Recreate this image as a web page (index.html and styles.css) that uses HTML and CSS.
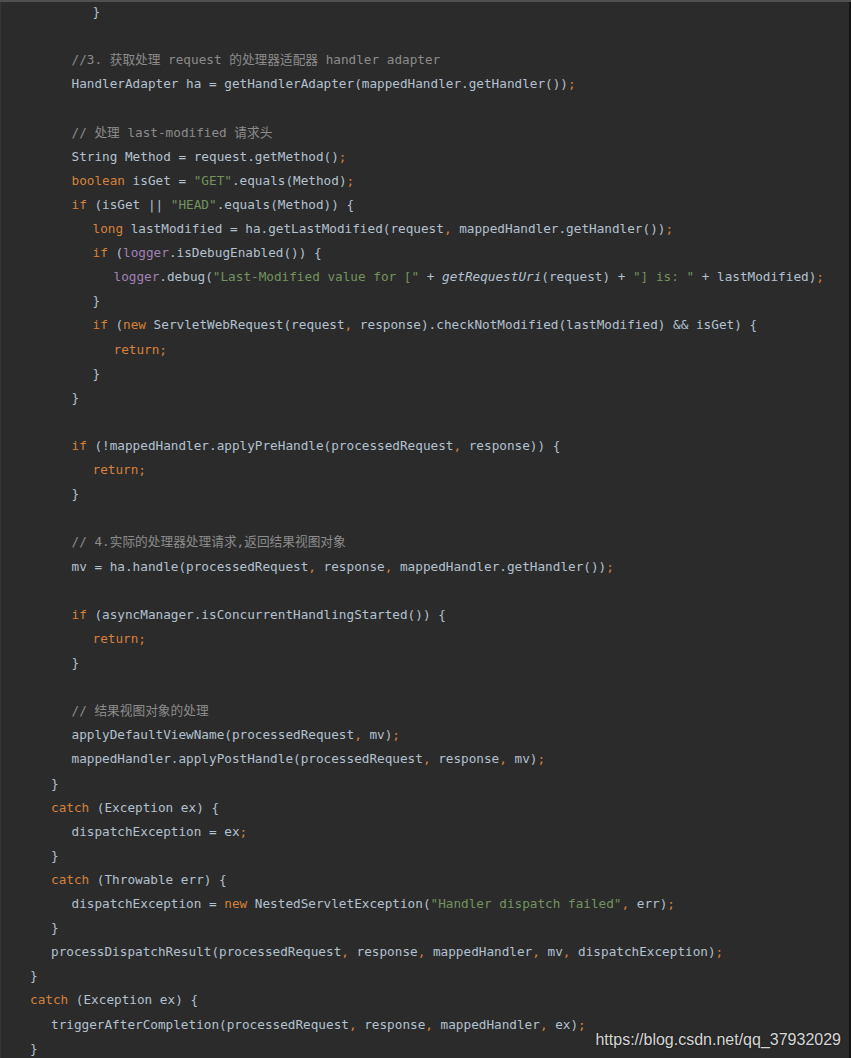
FILE: index.html
```html
<!DOCTYPE html>
<html lang="zh-CN">
<head>
  <meta charset="UTF-8">
  <meta name="viewport" content="width=device-width, initial-scale=1.0">
  <title>DispatcherServlet.doDispatch</title>
  <link rel="stylesheet" href="styles.css">
</head>
<body>
  <!-- Khối code -->
  <div class="code-shot">
    <div class="code">
      <div class="ln i3">}</div>
      <div class="ln"></div>
      <div class="ln i2"><span class="c">//3. 获取处理 request 的处理器适配器 handler adapter</span></div>
      <div class="ln i2">HandlerAdapter ha = getHandlerAdapter(mappedHandler.getHandler())<span class="k">;</span></div>
      <div class="ln"></div>
      <div class="ln i2"><span class="c">// 处理 last-modified 请求头</span></div>
      <div class="ln i2">String Method = request.getMethod()<span class="k">;</span></div>
      <div class="ln i2"><span class="k">boolean</span> isGet = <span class="s">"GET"</span>.equals(Method)<span class="k">;</span></div>
      <div class="ln i2"><span class="k">if</span> (isGet || <span class="s">"HEAD"</span>.equals(Method)) {</div>
      <div class="ln i3"><span class="k">long</span> lastModified = ha.getLastModified(request<span class="k">,</span> mappedHandler.getHandler())<span class="k">;</span></div>
      <div class="ln i3"><span class="k">if</span> (<span class="f">logger</span>.isDebugEnabled()) {</div>
      <div class="ln i4"><span class="f">logger</span>.debug(<span class="s">"Last-Modified value for ["</span> + <span class="m">getRequestUri</span>(request) + <span class="s">"] is: "</span> + lastModified)<span class="k">;</span></div>
      <div class="ln i3">}</div>
      <div class="ln i3"><span class="k">if</span> (<span class="k">new</span> ServletWebRequest(request<span class="k">,</span> response).checkNotModified(lastModified) &amp;&amp; isGet) {</div>
      <div class="ln i4"><span class="k">return;</span></div>
      <div class="ln i3">}</div>
      <div class="ln i2">}</div>
      <div class="ln"></div>
      <div class="ln i2"><span class="k">if</span> (!mappedHandler.applyPreHandle(processedRequest<span class="k">,</span> response)) {</div>
      <div class="ln i3"><span class="k">return;</span></div>
      <div class="ln i2">}</div>
      <div class="ln"></div>
      <div class="ln i2"><span class="c">// 4.实际的处理器处理请求,返回结果视图对象</span></div>
      <div class="ln i2">mv = ha.handle(processedRequest<span class="k">,</span> response<span class="k">,</span> mappedHandler.getHandler())<span class="k">;</span></div>
      <div class="ln"></div>
      <div class="ln i2"><span class="k">if</span> (asyncManager.isConcurrentHandlingStarted()) {</div>
      <div class="ln i3"><span class="k">return;</span></div>
      <div class="ln i2">}</div>
      <div class="ln"></div>
      <div class="ln i2"><span class="c">// 结果视图对象的处理</span></div>
      <div class="ln i2">applyDefaultViewName(processedRequest<span class="k">,</span> mv)<span class="k">;</span></div>
      <div class="ln i2">mappedHandler.applyPostHandle(processedRequest<span class="k">,</span> response<span class="k">,</span> mv)<span class="k">;</span></div>
      <div class="ln i1">}</div>
      <div class="ln i1"><span class="k">catch</span> (Exception ex) {</div>
      <div class="ln i2">dispatchException = ex<span class="k">;</span></div>
      <div class="ln i1">}</div>
      <div class="ln i1"><span class="k">catch</span> (Throwable err) {</div>
      <div class="ln i2">dispatchException = <span class="k">new</span> NestedServletException(<span class="s">"Handler dispatch failed"</span><span class="k">,</span> err)<span class="k">;</span></div>
      <div class="ln i1">}</div>
      <div class="ln i1">processDispatchResult(processedRequest<span class="k">,</span> response<span class="k">,</span> mappedHandler<span class="k">,</span> mv<span class="k">,</span> dispatchException)<span class="k">;</span></div>
      <div class="ln i0">}</div>
      <div class="ln i0"><span class="k">catch</span> (Exception ex) {</div>
      <div class="ln i1">triggerAfterCompletion(processedRequest<span class="k">,</span> response<span class="k">,</span> mappedHandler<span class="k">,</span> ex)<span class="k">;</span></div>
      <div class="ln i0">}</div>
    </div>

    <!-- Watermark -->
    <div class="watermark">https://blog.csdn.net/qq_37932029</div>
  </div>
</body>
</html>
```

FILE: styles.css
```css
body {
  margin: 0;
  padding: 0;
  background-color: #2b2b2b;
  overflow: hidden;
}

/* Khung ảnh chụp code */
.code-shot {
  position: relative;
  height: 1058px;
  background-color: #2b2b2b;
  box-shadow: inset 0 2px 0 #505050, inset 1px 0 0 #353535, inset -2px 0 0 #141414;
  overflow: hidden;
}

.code {
  font-family: 'DejaVu Sans Mono', 'Noto Sans CJK SC', monospace;
  font-size: 12.7px;
  line-height: 24.12px;
  color: #b3c1d0;
}

.ln {
  height: 24.12px;
  padding-left: 30px;
  white-space: pre;
}

.i1 { padding-left: 51px; }
.i2 { padding-left: 71.5px; }
.i3 { padding-left: 92.5px; }
.i4 { padding-left: 113.5px; }

/* Màu cú pháp */
.k {
  color: #d7813a;
}

.s {
  color: #74935f;
}

.c {
  color: #8c8c8c;
}

.f {
  color: #a281b6;
}

.m {
  font-style: italic;
}

/* Watermark */
.watermark {
  position: absolute;
  right: 10px;
  bottom: 8px;
  font-family: 'Liberation Sans', Arial, sans-serif;
  font-size: 16px;
  line-height: 20px;
  color: #d6d6d6;
  text-shadow: 0 0 2px rgba(0, 0, 0, 0.6);
}
```
